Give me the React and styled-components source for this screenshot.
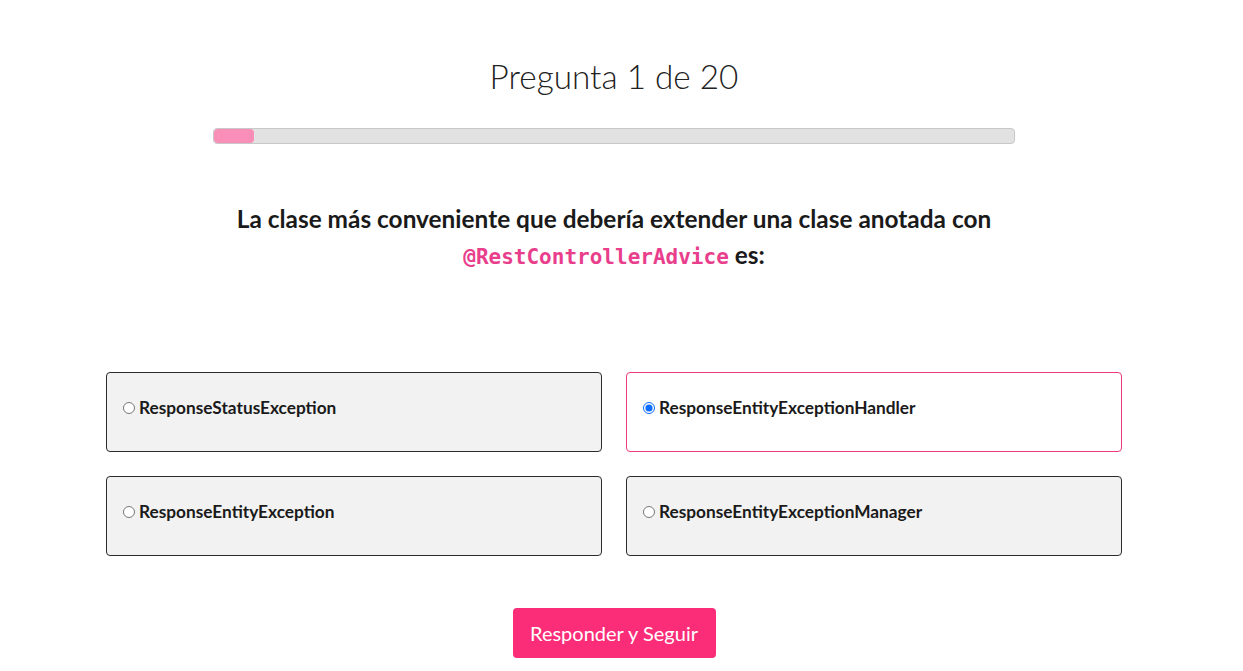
import { useState } from "react";
import styled, { createGlobalStyle } from "styled-components";

const Global = createGlobalStyle`
  body {
    margin: 0;
    background: #fff;
    font-family: Lato, "Open Sans", sans-serif;
    color: #212121;
  }
`

const Page = styled.div`
  padding: 52px 15px 0 0;
  display: flex;
  flex-direction: column;
  align-items: center;
`
const Title = styled.h1`
  margin: 0;
  font-size: 33.3px;
  font-weight: 300;
  line-height: 48px;
  color: #222;
`
const Track = styled.div`
  width: 800px;
  height: 14px;
  margin-top: 28px;
  border: 1px solid #c8c8c8;
  border-radius: 4px;
  background: #e2e2e2;
  overflow: hidden;
`
const Fill = styled.div`
  height: 100%;
  background: #f98fb8;
  border-radius: 4px;
`
const Question = styled.h2`
  margin: 57px 0 0;
  max-width: 800px;
  text-align: center;
  font-size: 24.4px;
  font-weight: 700;
  line-height: 36px;
  color: #1a1a1a;
`
const Code = styled.code`
  font-family: "DejaVu Sans Mono", "Liberation Mono", monospace;
  font-size: 21px;
  color: #e83e8c;
  font-weight: 700;
`
const Options = styled.div`
  margin-top: 97px;
  width: 1016px;
  display: grid;
  grid-template-columns: 1fr 1fr;
  gap: 24px;
`
const Option = styled.label`
  box-sizing: border-box;
  height: 80px;
  padding: 25px 16px;
  display: flex;
  align-items: flex-start;
  gap: 4px;
  border: 1px solid ${(p) => (p.$active ? "#f0387c" : "#2b2b2b")};
  border-radius: 4px;
  background: ${(p) => (p.$active ? "#fff" : "#f2f2f2")};
  font-size: 17.25px;
  font-weight: 700;
  line-height: 20px;
  color: #1a1a1a;
  cursor: pointer;
`
const Radio = styled.input`
  margin: 4px 0 0;
  width: 12px;
  height: 12px;
  accent-color: #0a6cff;
`
const Button = styled.button`
  margin-top: 52px;
  width: 203px;
  height: 50px;
  border: none;
  border-radius: 4px;
  background: #fb2d78;
  color: #fff;
  font-family: Lato, sans-serif;
  font-size: 20px;
  font-weight: 400;
  cursor: pointer;
`

const answers = [
  "ResponseStatusException",
  "ResponseEntityExceptionHandler",
  "ResponseEntityException",
  "ResponseEntityExceptionManager",
];

const App = () => {
  const [picked, setPicked] = useState(1);

  return (
    <>
      <Global />
      <Page>
        <Title>Pregunta 1 de 20</Title>
        <Track>
          <Fill style={{ width: `${(1 / 20) * 100}%` }} />
        </Track>
        <Question>
          La clase más conveniente que debería extender una clase anotada con{" "}
          <Code>@RestControllerAdvice</Code> es:
        </Question>
        <Options>
          {answers.map((a, i) => (
            <Option key={a} $active={picked === i}>
              <Radio
                type="radio"
                name="answer"
                checked={picked === i}
                onChange={() => setPicked(i)}
              />
              {a}
            </Option>
          ))}
        </Options>
        <Button>Responder y Seguir</Button>
      </Page>
    </>
  );
};

export default App;
